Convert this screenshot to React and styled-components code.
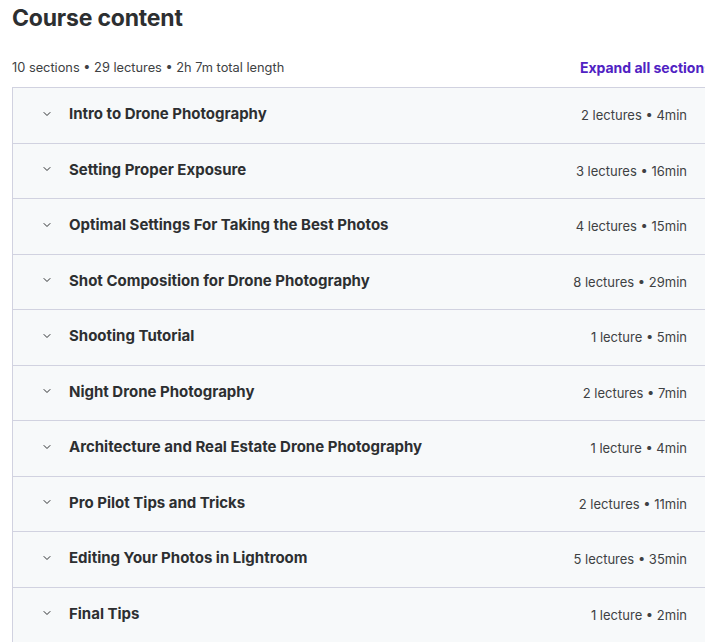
import styled, { createGlobalStyle } from "styled-components";
import { ChevronDown } from "lucide-react";

const Global = createGlobalStyle`
    html, body {
        margin: 0;
        background: #fff;
        overflow: hidden;
    }
    body {
        font-family: Inter, "Noto Sans", sans-serif;
        color: #2d2f31;
    }
`;

const Page = styled.div`
    width: 700px;
    padding-left: 12px;
`;

const Title = styled.h2`
    margin: 0;
    padding-top: 4px;
    font-size: 23px;
    font-weight: 700;
    letter-spacing: -0.2px;
    line-height: 28px;
    color: #2d2f31;
`;

const MetaRow = styled.div`
    display: flex;
    justify-content: space-between;
    align-items: center;
    margin-top: 24px;
    margin-bottom: 9px;
    height: 22px;
`;

const Meta = styled.span`
    font-size: 12.8px;
    color: #3e4143;
`;

const Expand = styled.button`
    border: 0;
    background: none;
    padding: 0;
    font-family: inherit;
    font-size: 14px;
    font-weight: 700;
    color: #5022c3;
    white-space: nowrap;
    cursor: pointer;
`;

const List = styled.div`
    border: 1px solid #d1d2e0;
    border-bottom: 0;
`;

const Section = styled.div`
    display: flex;
    align-items: center;
    gap: 16px;
    height: 55.5px;
    box-sizing: border-box;
    padding: 0 24px 3px 28px;
    background: #f7f9fa;
    border-bottom: 1px solid #d1d2e0;
`;

const Chevron = styled(ChevronDown)`
    flex: none;
    color: #2d2f31;
`;

const Name = styled.span`
    flex: 1;
    font-size: 15px;
    font-weight: 700;
    color: #2d2f31;
`;

const Content = styled.span`
    padding-top: 3px;
    font-size: 13px;
    color: #3e4143;
`;

const sections = [
    ["Intro to Drone Photography", "2 lectures • 4min"],
    ["Setting Proper Exposure", "3 lectures • 16min"],
    ["Optimal Settings For Taking the Best Photos", "4 lectures • 15min"],
    ["Shot Composition for Drone Photography", "8 lectures • 29min"],
    ["Shooting Tutorial", "1 lecture • 5min"],
    ["Night Drone Photography", "2 lectures • 7min"],
    ["Architecture and Real Estate Drone Photography", "1 lecture • 4min"],
    ["Pro Pilot Tips and Tricks", "2 lectures • 11min"],
    ["Editing Your Photos in Lightroom", "5 lectures • 35min"],
    ["Final Tips", "1 lecture • 2min"],
];

export default function App() {
    return <Page>
        <Global />
        <Title>Course content</Title>
        <MetaRow>
            <Meta>10 sections • 29 lectures • 2h 7m total length</Meta>
            <Expand>Expand all sections</Expand>
        </MetaRow>
        <List>
            {sections.map(([name, content]) => (
                <Section key={name}>
                    <Chevron size={12} strokeWidth={2} />
                    <Name>{name}</Name>
                    <Content>{content}</Content>
                </Section>
            ))}
        </List>
    </Page>;
}
